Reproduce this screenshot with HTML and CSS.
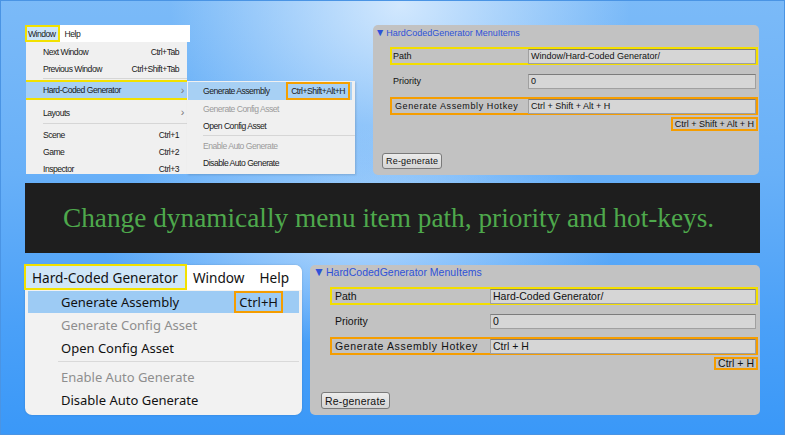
FILE: index.html
```html
<!DOCTYPE html>
<html>
<head>
<meta charset="utf-8">
<link rel="stylesheet" href="styles.css">
</head>
<body>
<div class="row-top">
  <div class="wm">
    <div class="wm-main">
      <div class="mb-sm">
        <span class="mbs-item mbs-active">Window</span><span class="mbs-item">Help</span>
      </div>
      <div class="dd-sm">
        <div class="di"><span>Next Window</span><span class="sc">Ctrl+Tab</span></div>
        <div class="di"><span>Previous Window</span><span class="sc">Ctrl+Shift+Tab</span></div>
        <div class="ds"></div>
        <div class="di di-hl"><span>Hard-Coded Generator</span><span class="arr">›</span></div>
        <div class="di di-gap"><span>Layouts</span><span class="arr">›</span></div>
        <div class="ds ds-b"></div>
        <div class="di"><span>Scene</span><span class="sc">Ctrl+1</span></div>
        <div class="di"><span>Game</span><span class="sc">Ctrl+2</span></div>
        <div class="di"><span>Inspector</span><span class="sc">Ctrl+3</span></div>
      </div>
    </div>
    <div class="sub-sm">
      <div class="si si-hl"><span>Generate Assembly</span><span class="sc-box">Ctrl+Shift+Alt+H</span></div>
      <div class="si si-dis"><span>Generate Config Asset</span></div>
      <div class="si"><span>Open Config Asset</span></div>
      <div class="ss"></div>
      <div class="si si-dis"><span>Enable Auto Generate</span></div>
      <div class="si"><span>Disable Auto Generate</span></div>
    </div>
  </div>

  <div class="insp insp-top">
    <div class="insp-title"><span class="tri">▼</span>HardCodedGenerator MenuItems</div>
    <div class="props">
      <div class="prop prop-yel"><span class="plabel">Path</span><span class="field">Window/Hard-Coded Generator/</span></div>
      <div class="prop"><span class="plabel">Priority</span><span class="field">0</span></div>
      <div class="prop prop-org"><span class="plabel plabel-hk">Generate Assembly Hotkey</span><span class="field">Ctrl + Shift + Alt + H</span></div>
    </div>
    <div class="hint-row"><span class="hint">Ctrl + Shift + Alt + H</span></div>
    <button class="btn">Re-generate</button>
  </div>
</div>

<div class="banner">Change dynamically menu item path, priority and hot-keys.</div>

<div class="row-bottom">
  <div class="wl">
    <div class="mb-lg">
      <span class="mbl-item mbl-active">Hard-Coded Generator</span><span class="mbl-item">Window</span><span class="mbl-item mbl-help">Help</span>
    </div>
    <div class="dd-lg">
      <div class="li li-hl"><span>Generate Assembly</span><span class="sc-box-lg">Ctrl+H</span></div>
      <div class="li li-dis"><span>Generate Config Asset</span></div>
      <div class="li"><span>Open Config Asset</span></div>
      <div class="ls"></div>
      <div class="li li-dis"><span>Enable Auto Generate</span></div>
      <div class="li"><span>Disable Auto Generate</span></div>
    </div>
  </div>

  <div class="insp insp-bottom">
    <div class="insp-title"><span class="tri">▼</span>HardCodedGenerator MenuItems</div>
    <div class="props">
      <div class="prop prop-yel"><span class="plabel">Path</span><span class="field">Hard-Coded Generator/</span></div>
      <div class="prop"><span class="plabel">Priority</span><span class="field">0</span></div>
      <div class="prop prop-org"><span class="plabel plabel-hk">Generate Assembly Hotkey</span><span class="field">Ctrl + H</span></div>
    </div>
    <div class="hint-row"><span class="hint">Ctrl + H</span></div>
    <button class="btn">Re-generate</button>
  </div>
</div>
</body>
</html>
```

FILE: styles.css
```css
* { box-sizing: border-box; }
html, body { margin: 0; }
body {
  width: 785px;
  height: 435px;
  overflow: hidden;
  padding: 25px 0 0 25px;
  display: flex;
  flex-direction: column;
  font-family: "Liberation Sans", Arial, sans-serif;
  color: #111;
  background:
    radial-gradient(ellipse 230px 190px at 400px 5px, rgba(214,234,254,0.95), rgba(214,234,254,0)),
    radial-gradient(ellipse 260px 110px at 360px 235px, rgba(196,225,254,0.85), rgba(196,225,254,0)),
    linear-gradient(180deg, #7bbaf8 0%, #68b0f8 40%, #4aa0f8 75%, #3a98f8 100%);
  box-shadow: inset 0 0 0 1px #4a94e4;
}

/* ---------- rows ---------- */
.row-top { display: flex; gap: 18px; height: 150px; }
.row-bottom { display: flex; gap: 8px; height: 150px; margin-top: 12px; }

.banner {
  margin-top: 8px;
  width: 735px;
  height: 70px;
  background: #1e1e1e;
  display: flex;
  align-items: center;
  padding-left: 38px;
  font-family: "Liberation Serif", "Times New Roman", serif;
  font-size: 27.3px;
  color: #4ea94c;
  white-space: nowrap;
}

/* ---------- small windows menu (top-left) ---------- */
.wm { display: flex; width: 330px; height: 149px; font-family: "Liberation Sans", Arial, sans-serif; font-size: 8.6px; letter-spacing: -0.5px; white-space: nowrap; color: #1a1a1a; }
.wm-main { width: 162px; display: flex; flex-direction: column; }
.mb-sm { width: 165px; height: 17px; background: #fff; display: flex; align-items: stretch; }
.mbs-item { padding: 0 3px; line-height: 15px; border: 2px solid transparent; }
.mbs-active { background: #cde5f8; border-color: #f2e100; padding: 0 2px 0 1px; }
.dd-sm { margin-left: 1px; width: 161px; height: 132px; background: #f0f0f0; padding-top: 1px; overflow: hidden; }
.di { height: 17px; display: flex; align-items: center; justify-content: space-between; padding: 0 8px 0 17px; }
.di-hl { height: 20px; margin-left: -2px; padding: 0 3px 0 17px; background: #a7d0f4; border: 2px solid #f2e100; border-right: none; }
.di-gap { margin-top: 4px; padding-right: 3px; }
.ds { height: 1px; background: #d6d6d6; margin: 1px 0 1px 17px; }
.ds-b { margin: 2px 0 2px 17px; }
.arr { color: #777; font-size: 11px; line-height: 1; }

.sub-sm { margin-top: 56px; width: 168px; height: 93px; background: #f0f0f0; padding-top: 1px; box-shadow: 1px 1px 2px rgba(0,0,0,0.15); }
.si { height: 17px; display: flex; align-items: center; justify-content: space-between; padding: 0 2px 0 15px; margin-left: 1px; }
.si-hl { height: 18px; background: #a7d0f4; margin-right: 3px; }
.si-dis { color: #9b9b9b; }
.sc-box { height: 18px; line-height: 14px; border: 2px solid #f5a000; padding: 0 3px; }
.ss { height: 1px; background: #d6d6d6; margin: 1px 0 1px 16px; }

/* ---------- large windows menu (bottom-left) ---------- */
.wl {
  width: 277px;
  height: 150px;
  background: #f2f2f2;
  border-radius: 7px;
  box-shadow: 0 0 2px rgba(0,0,0,0.18);
  font-family: "Noto Sans", "Open Sans", sans-serif;
  font-size: 13px;
  white-space: nowrap;
}
.mb-lg { height: 25px; background: #fff; border-radius: 7px 7px 0 0; display: flex; align-items: stretch; font-size: 13.6px; }
.mbl-item { padding: 0 6px; line-height: 25px; }
.mbl-help { padding-left: 9px; }
.mbl-active { margin: -1px 0 0 -1px; height: 26px; line-height: 23px; background: #cfe6f8; border: 2px solid #f2e100; padding: 0 7px 0 6px; }
.dd-lg { padding: 1px 3px 0 3px; }
.li { height: 23px; display: flex; align-items: center; justify-content: space-between; padding: 0 16px 0 33px; }
.li-hl { height: 22px; background: #9dcbf4; }
.li-dis { color: #8e8e8e; }
.sc-box-lg { height: 22px; line-height: 18px; border: 2px solid #f59d00; padding: 0 3px; }
.ls { height: 1px; background: #d9d9d9; margin: 2px 0 3px 30px; }

/* ---------- inspectors ---------- */
.insp {
  background: #c2c2c2;
  border-radius: 5px;
  height: 150px;
  padding-top: 1px;
  display: flex;
  flex-direction: column;
}
.insp-top { width: 386px; --lw: 136px; --fs: 9px; }
.insp-bottom { width: 450px; --lw: 158px; --fs: 10.5px; }
.insp-title { height: 13px; line-height: 13px; padding-left: 2px; color: #2f52d8; font-size: var(--fs); white-space: nowrap; }
.insp-bottom .insp-title { padding-left: 3px; }
.tri { font-size: 1.15em; margin-right: 1px; }
.props { margin-top: 8px; padding: 0 1px 0 17px; display: flex; flex-direction: column; gap: 7px; }
.insp-bottom .props { padding: 0 2px 0 20px; }
.prop { height: 18px; display: flex; align-items: center; border: 2px solid transparent; }
.prop-yel { border-color: #f3de00; }
.prop-org { border-color: #f59d00; }
.plabel { width: var(--lw); flex: none; padding-left: 1px; font-size: var(--fs); white-space: nowrap; }
.insp-bottom .plabel { padding-left: 3px; }
.plabel-hk { padding-left: 3px; letter-spacing: 0.6px; }
.insp-bottom .plabel-hk { letter-spacing: 0.65px; }
.field {
  flex: 1;
  height: 15px;
  background: #d6d6d6;
  border: 1px solid #a0a0a0;
  border-top-color: #7c7c7c;
  font-size: var(--fs);
  line-height: 13px;
  padding-left: 2px;
  white-space: nowrap;
}
.hint-row { display: flex; justify-content: flex-end; margin-top: 2px; padding-right: 1px; }
.insp-bottom .hint-row { padding-right: 2px; }
.hint { height: 14px; line-height: 10px; border: 2px solid #f59d00; padding: 0 2px; font-size: var(--fs); white-space: nowrap; }
.insp-bottom .hint { height: 13px; line-height: 9px; }
.btn {
  margin: auto 0 6px 9px;
  align-self: flex-start;
  height: 16px;
  padding: 0 3px;
  font-family: "Liberation Sans", Arial, sans-serif;
  font-size: var(--fs);
  letter-spacing: 0.2px;
  color: #111;
  background: linear-gradient(#ececec, #d4d4d4);
  border: 1px solid #7a7a7a;
  border-radius: 3px;
}
.insp-bottom .btn { margin-left: 11px; height: 17px; }
```
